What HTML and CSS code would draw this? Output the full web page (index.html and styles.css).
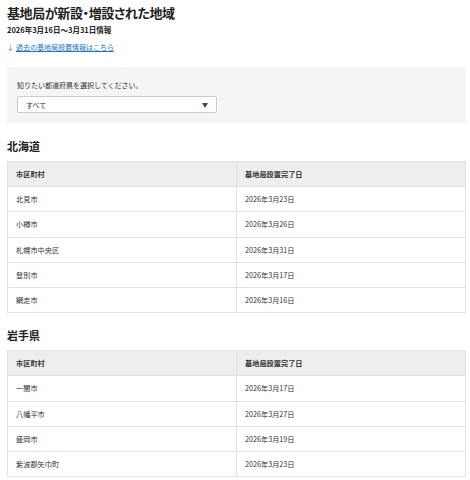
FILE: index.html
```html
<!DOCTYPE html>
<html lang="ja">
<head>
  <meta charset="UTF-8">
  <meta name="viewport" content="width=device-width, initial-scale=1.0">
  <title>基地局が新設・増設された地域</title>
  <link rel="stylesheet" href="styles.css">
</head>
<body>
  <div class="page">
    <h1 class="page-title">基地局が新設・増設された地域</h1>
    <p class="period">2026年3月16日〜3月31日情報</p>
    <p class="past-link"><span class="arrow">↓</span><a href="#">過去の基地局設置情報はこちら</a></p>

    <div class="filter-box">
      <p class="filter-label">知りたい都道府県を選択してください。</p>
      <div class="select-box">
        <span>すべて</span>
        <span class="select-arrow">▼</span>
      </div>
    </div>

    <h2 class="pref-heading">北海道</h2>
    <table class="area-table">
      <tr><th>市区町村</th><th>基地局設置完了日</th></tr>
      <tr><td>北見市</td><td>2026年3月23日</td></tr>
      <tr><td>小樽市</td><td>2026年3月26日</td></tr>
      <tr><td>札幌市中央区</td><td>2026年3月31日</td></tr>
      <tr><td>登別市</td><td>2026年3月17日</td></tr>
      <tr><td>網走市</td><td>2026年3月16日</td></tr>
    </table>

    <h2 class="pref-heading">岩手県</h2>
    <table class="area-table">
      <tr><th>市区町村</th><th>基地局設置完了日</th></tr>
      <tr><td>一関市</td><td>2026年3月17日</td></tr>
      <tr><td>八幡平市</td><td>2026年3月27日</td></tr>
      <tr><td>盛岡市</td><td>2026年3月19日</td></tr>
      <tr><td>紫波郡矢巾町</td><td>2026年3月23日</td></tr>
    </table>
  </div>
</body>
</html>
```

FILE: styles.css
```css
body {
  margin: 0;
  padding: 0;
  background-color: #fff;
  color: #333;
  font-family: "Noto Sans CJK JP", "Noto Sans", sans-serif;
}

.page {
  padding: 0 4px 0 7px;
}

.page-title {
  margin: 4px 0 0;
  font-size: 13px;
  line-height: 18px;
  font-weight: bold;
  color: #222;
  letter-spacing: -0.4px;
  font-feature-settings: "palt";
}

.period {
  margin: 2px 0 0;
  font-size: 7.5px;
  line-height: 12px;
  font-weight: bold;
  color: #222;
  font-feature-settings: "palt";
}

.past-link {
  margin: 5px 0 0;
  font-size: 7px;
  line-height: 12px;
}

.arrow {
  color: #e8409a;
  margin-right: 2px;
}

.past-link a {
  color: #1b73c1;
  text-decoration: underline;
}

.filter-box {
  margin-top: 14px;
  padding: 12px 10px 10px;
  background-color: #f5f5f5;
}

.filter-label {
  margin: 0;
  font-size: 7px;
  line-height: 12px;
  color: #333;
}

.select-box {
  display: flex;
  justify-content: space-between;
  align-items: center;
  box-sizing: border-box;
  width: 200px;
  height: 17px;
  margin-top: 5px;
  padding: 0 8px;
  background: #fff;
  border: 1px solid #ccc;
  border-radius: 2px;
  font-size: 7px;
  color: #333;
}

.select-arrow {
  font-size: 6px;
  color: #444;
}

.pref-heading {
  margin: 15px 0 0;
  font-size: 11px;
  line-height: 16px;
  font-weight: bold;
  color: #222;
}

.pref-heading + .area-table {
  margin-top: 7px;
}

.pref-heading:nth-of-type(2) {
  margin-top: 14px;
}

.area-table {
  width: 100%;
  border-collapse: collapse;
  font-size: 7.2px;
  color: #333;
}

.area-table th,
.area-table td {
  width: 50%;
  height: 24.2px;
  padding: 0 8px;
  border: 1px solid #e2e2e2;
  text-align: left;
  vertical-align: middle;
}

.area-table th {
  background-color: #eeeeee;
  font-weight: bold;
}
```
